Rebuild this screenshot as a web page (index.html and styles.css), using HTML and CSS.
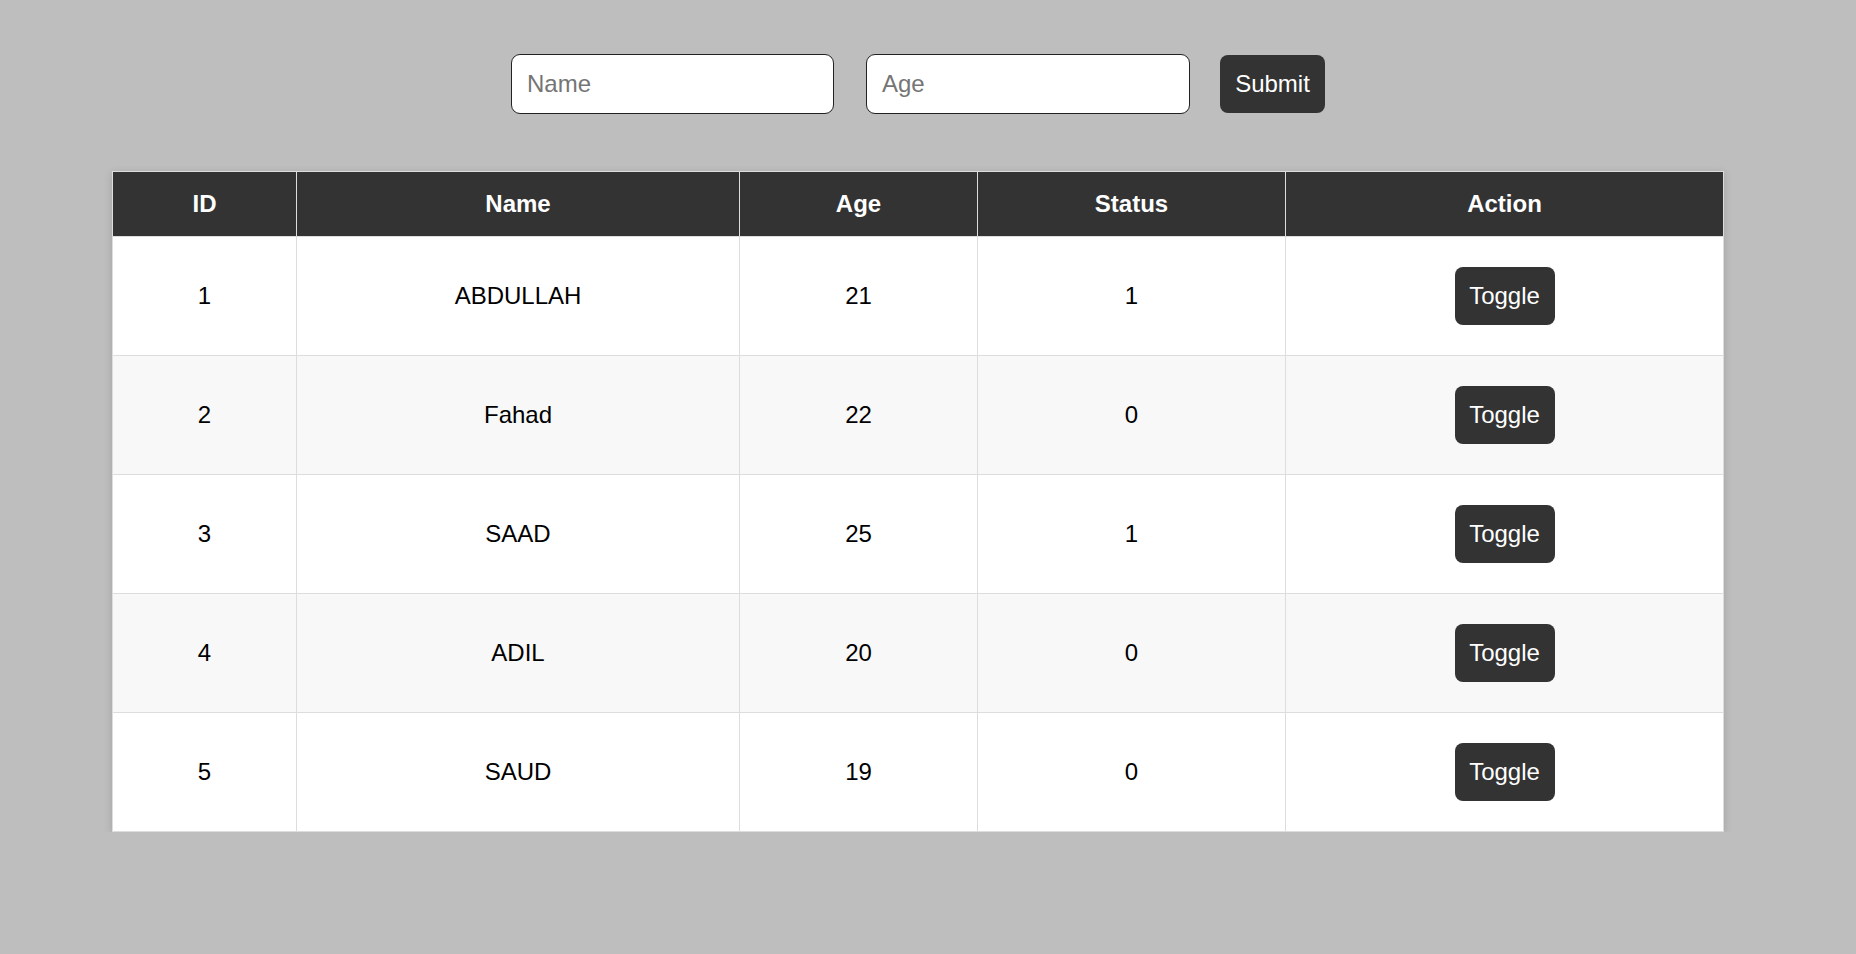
FILE: index.html
```html
<!DOCTYPE html>
<html lang="en">
<head>
<meta charset="utf-8">
<title>Users</title>
<link rel="stylesheet" href="styles.css">
</head>
<body>
<div class="page">
  <form class="entry-form">
    <input class="field field-name" type="text" placeholder="Name">
    <input class="field field-age" type="text" placeholder="Age">
    <button class="btn btn-submit" type="button">Submit</button>
  </form>
  <table class="users">
    <colgroup>
      <col class="c-id"><col class="c-name"><col class="c-age"><col class="c-status"><col class="c-action">
    </colgroup>
    <thead>
      <tr><th>ID</th><th>Name</th><th>Age</th><th>Status</th><th>Action</th></tr>
    </thead>
    <tbody>
      <tr><td>1</td><td>ABDULLAH</td><td>21</td><td>1</td><td><button class="btn btn-toggle" type="button">Toggle</button></td></tr>
      <tr><td>2</td><td>Fahad</td><td>22</td><td>0</td><td><button class="btn btn-toggle" type="button">Toggle</button></td></tr>
      <tr><td>3</td><td>SAAD</td><td>25</td><td>1</td><td><button class="btn btn-toggle" type="button">Toggle</button></td></tr>
      <tr><td>4</td><td>ADIL</td><td>20</td><td>0</td><td><button class="btn btn-toggle" type="button">Toggle</button></td></tr>
      <tr><td>5</td><td>SAUD</td><td>19</td><td>0</td><td><button class="btn btn-toggle" type="button">Toggle</button></td></tr>
    </tbody>
  </table>
</div>
</body>
</html>
```
FILE: styles.css
```css
html, body {
  margin: 0;
  padding: 0;
  background: #bebebe;
  font-family: "Liberation Sans", Arial, sans-serif;
  font-size: 24px;
  color: #000;
}

.page {
  width: 1836px;
  display: flex;
  flex-direction: column;
  align-items: center;
  padding-top: 54px;
}

.entry-form {
  display: flex;
  align-items: center;
  height: 60px;
}

.field {
  box-sizing: border-box;
  height: 60px;
  border: 1px solid #222;
  border-radius: 9px;
  background: #fff;
  padding: 0 15px;
  font-family: inherit;
  font-size: 24px;
  color: #000;
  outline: none;
}
.field::placeholder { color: #757575; }

.field-name { width: 323px; }
.field-age { width: 324px; margin-left: 32px; }

.btn {
  box-sizing: border-box;
  background: #333;
  color: #fff;
  border: none;
  border-radius: 8px;
  font-family: inherit;
  font-size: 24px;
  padding: 0;
  cursor: pointer;
}

.btn-submit {
  width: 105px;
  height: 58px;
  margin-left: 30px;
}

.users {
  margin-top: 57px;
  width: 1611px;
  table-layout: fixed;
  border-collapse: collapse;
  background: #fff;
  box-shadow: 0 2px 8px rgba(0, 0, 0, 0.15);
}

.c-id { width: 184px; }
.c-name { width: 443px; }
.c-age { width: 238px; }
.c-status { width: 308px; }
.c-action { width: 438px; }

.users th,
.users td {
  border: 1px solid #ddd;
  text-align: center;
  padding: 0;
}

.users thead tr { height: 65px; }
.users th {
  background: #333;
  color: #fff;
  font-weight: bold;
}

.users tbody tr { height: 119px; }
.users tbody tr:nth-child(even) td { background: #f8f8f8; }

.btn-toggle {
  width: 100px;
  height: 58px;
}
```
